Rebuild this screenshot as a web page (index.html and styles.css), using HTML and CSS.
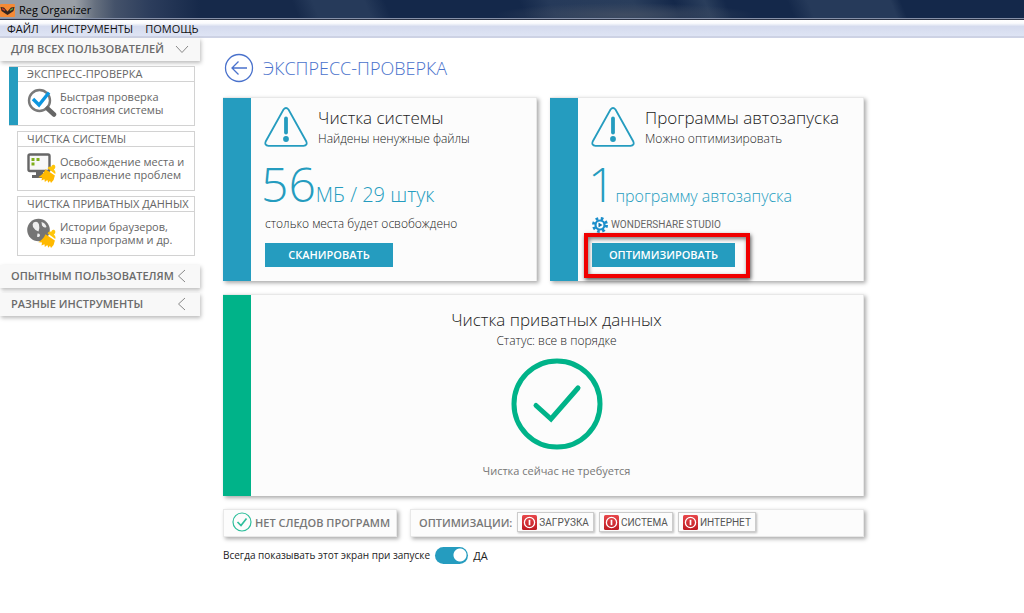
FILE: index.html
```html
<!DOCTYPE html>
<html lang="ru">
<head>
  <meta charset="UTF-8" />
  <meta name="viewport" content="width=device-width, initial-scale=1.0" />
  <title>Reg Organizer</title>
  <link rel="stylesheet" href="styles.css">
</head>
<body>
  <!-- shared icons -->
  <svg class="sprite" aria-hidden="true">
    <symbol id="warning" viewBox="0 0 44 40">
      <path d="M19.5 2.5Q22 -0.5 24.500 2.500L42.300 34.500Q43.800 38.500 39.500 38.800H4.500Q0.200 38.500 1.700 34.500Z" fill="none" stroke="currentColor" stroke-width="1.800"/>
      <path d="M22 11.500V25.500" stroke="currentColor" stroke-width="3.800" stroke-linecap="round"/>
      <circle cx="22" cy="32" r="2.900" fill="currentColor"/>
    </symbol>
    <symbol id="power" viewBox="0 0 15 15">
      <rect width="15" height="15" rx="1.500" fill="url(#red)"/>
      <circle cx="7.500" cy="7.500" r="5.100" fill="none" stroke="#fff" stroke-width="1.300"/>
      <path d="M7.500 4.800V10.200" stroke="#fff" stroke-width="1.700"/>
    </symbol>
    <symbol id="broom" viewBox="0 0 18 19">
      <path d="M9.500 4.200Q10.800 1.800 13.200 2.800Q14 0.200 16 0.800Q18 1.800 17 4.200Q16.600 5 15.800 5.500Q18.200 7.500 17.200 10Z" fill="#ffc60a"/>
      <path d="M7.500 5.200L16.900 11.500Q16.500 15.800 13 19L12 16.800L10.300 18.800L9.300 16L6.800 18L6.500 15.300L3.500 16.500L4 13.500L0.300 13.200Q5.500 10 7.500 5.200Z" fill="#ffb900"/>
    </symbol>
    <linearGradient id="red" x1="0" y1="0" x2="0" y2="1">
      <stop offset="0" stop-color="#e8474b"/>
      <stop offset="1" stop-color="#bd1b22"/>
    </linearGradient>
  </svg>

  <header class="titlebar">
    <svg class="app-icon" width="15" height="16" viewBox="0 0 15 16" aria-hidden="true">
      <rect y="2" width="15" height="13" rx="1" fill="#f58a35"/>
      <path d="M0.500 5L4 5.500L7.500 9.500L11 5.500L14.500 5L13.500 9L7.500 13L1.500 9Z" fill="#33251f"/>
      <path d="M2 6.500L5 8.500" stroke="#d0412c" stroke-width="1.500"/>
      <path d="M10 8.500L13 6.500" stroke="#69a243" stroke-width="1.500"/>
    </svg>
    <span>Reg Organizer</span>
  </header>

  <nav class="menubar">
    <button type="button">ФАЙЛ</button>
    <button type="button">ИНСТРУМЕНТЫ</button>
    <button type="button">ПОМОЩЬ</button>
  </nav>

  <div class="layout">
    <aside class="sidebar">
      <button type="button" class="group">
        ДЛЯ ВСЕХ ПОЛЬЗОВАТЕЛЕЙ
        <svg width="14" height="14" viewBox="0 0 14 14"><path d="M1 4L7 10.500L13 4" fill="none" stroke="#888"/></svg>
      </button>
      <div class="items">
        <a href="#" class="item active">
          <span class="item-title">ЭКСПРЕСС-ПРОВЕРКА</span>
          <span class="item-body">
            <svg width="30" height="30" viewBox="0 0 30 30">
              <circle cx="12.500" cy="12.500" r="10.500" fill="#fff" stroke="#7a7a7a" stroke-width="2.400"/>
              <path d="M20.500 20.500L27 26.500" stroke="#666" stroke-width="4.500" stroke-linecap="round"/>
              <path d="M6 11L12 17L22 4.500" fill="none" stroke="#0c96e0" stroke-width="3.400"/>
            </svg>
            <span>Быстрая проверка<br>состояния системы</span>
          </span>
        </a>
        <a href="#" class="item">
          <span class="item-title">ЧИСТКА СИСТЕМЫ</span>
          <span class="item-body">
            <svg width="30" height="30" viewBox="0 0 30 30">
              <rect x="1.500" y="1.500" width="21" height="16.500" rx="1.500" fill="#f8f8f8" stroke="#666" stroke-width="2.400"/>
              <path d="M9 18H16V22H20V25H5V22H9Z" fill="#666"/>
              <path d="M4.500 5H7.500V8H4.500ZM9.500 5H12.500V8H9.500ZM4.500 9.500H7.500V12.500H4.500Z" fill="#7fae1b"/>
              <use href="#broom" x="11" y="11" width="18" height="19"/>
            </svg>
            <span>Освобождение места и<br>исправление проблем</span>
          </span>
        </a>
        <a href="#" class="item">
          <span class="item-title">ЧИСТКА ПРИВАТНЫХ ДАННЫХ</span>
          <span class="item-body">
            <svg width="30" height="30" viewBox="0 0 30 30">
              <circle cx="11.500" cy="12" r="11.300" fill="#757575"/>
              <path d="M6.500 4.500Q11 2.500 12 6.500Q13 10.500 11.500 13.500Q7.500 12 6 9Q5 6 6.500 4.500ZM14.500 4Q18.500 5 19.500 9Q17 10.500 15 7.500ZM10.500 15.500Q13 15 13 17.500Q12 20 10 18.500Z" fill="#eee"/>
              <use href="#broom" x="11" y="11" width="18" height="19"/>
            </svg>
            <span>Истории браузеров,<br>кэша программ и др.</span>
          </span>
        </a>
      </div>
      <button type="button" class="group">
        ОПЫТНЫМ ПОЛЬЗОВАТЕЛЯМ
        <svg width="14" height="14" viewBox="0 0 14 14"><path d="M10 1L3.500 7L10 13" fill="none" stroke="#888"/></svg>
      </button>
      <button type="button" class="group">
        РАЗНЫЕ ИНСТРУМЕНТЫ
        <svg width="14" height="14" viewBox="0 0 14 14"><path d="M10 1L3.500 7L10 13" fill="none" stroke="#888"/></svg>
      </button>
    </aside>

    <main class="content">
      <div class="heading">
        <button type="button" class="back" aria-label="Назад">
          <svg width="30" height="30" viewBox="0 0 30 30">
            <circle cx="15" cy="15" r="13.500" fill="none" stroke="#4a72cc" stroke-width="1.300"/>
            <path d="M23 15H8M14.500 8.500L8 15L14.500 21.500" fill="none" stroke="#4a72cc" stroke-width="1.300"/>
          </svg>
        </button>
        <h1>ЭКСПРЕСС-ПРОВЕРКА</h1>
      </div>

      <div class="cards">
        <section class="card">
          <div class="card-head">
            <svg width="44" height="40"><use href="#warning"/></svg>
            <div>
              <h2>Чистка системы</h2>
              <p>Найдены ненужные файлы</p>
            </div>
          </div>
          <div class="amount"><strong>56</strong><span>МБ / 29 штук</span></div>
          <p class="note">столько места будет освобождено</p>
          <button type="button" class="action">СКАНИРОВАТЬ</button>
        </section>

        <section class="card">
          <div class="card-head">
            <svg width="44" height="40"><use href="#warning"/></svg>
            <div>
              <h2>Программы автозапуска</h2>
              <p>Можно оптимизировать</p>
            </div>
          </div>
          <div class="amount programs"><strong>1</strong><span>программу автозапуска</span></div>
          <p class="note program">
            <svg width="16" height="16" viewBox="0 0 16 16">
              <circle cx="8" cy="8" r="6.500" fill="none" stroke="#1b8ecb" stroke-width="3" stroke-dasharray="2.600 2.505"/>
              <circle cx="8" cy="8" r="4.500" fill="#fff" stroke="#1b8ecb" stroke-width="2.200"/>
              <path d="M6.500 5.500L10.500 8L6.500 10.500Z" fill="#1579b0"/>
            </svg>
            WONDERSHARE STUDIO
          </p>
          <div class="marked">
            <button type="button" class="action wide">ОПТИМИЗИРОВАТЬ</button>
            <span class="marker"></span>
          </div>
        </section>

        <section class="card ok">
          <h2>Чистка приватных данных</h2>
          <p>Статус: все в порядке</p>
          <svg width="92" height="92" viewBox="0 0 92 92" aria-hidden="true">
            <circle cx="46" cy="46" r="43" fill="none" stroke="#00b389" stroke-width="5"/>
            <path d="M25 47.500L40 61L67 30" fill="none" stroke="#00b389" stroke-width="5" stroke-linecap="round"/>
          </svg>
          <p class="status">Чистка сейчас не требуется</p>
        </section>
      </div>

      <div class="summary">
        <div class="panel traces">
          <svg width="20" height="20" viewBox="0 0 20 20" aria-hidden="true">
            <circle cx="10" cy="10" r="9" fill="none" stroke="#2dbe9b" stroke-width="1.200"/>
            <path d="M5.500 10L9 13.500L14.500 6.500" fill="none" stroke="#2dbe9b" stroke-width="1.700"/>
          </svg>
          НЕТ СЛЕДОВ ПРОГРАММ
        </div>
        <div class="panel optimize">
          <span class="label">ОПТИМИЗАЦИИ:</span>
          <button type="button" class="chip"><svg width="15" height="15"><use href="#power"/></svg>ЗАГРУЗКА</button>
          <button type="button" class="chip"><svg width="15" height="15"><use href="#power"/></svg>СИСТЕМА</button>
          <button type="button" class="chip"><svg width="15" height="15"><use href="#power"/></svg>ИНТЕРНЕТ</button>
        </div>
      </div>

      <div class="startup">
        <label for="showOnStart">Всегда показывать этот экран при запуске</label>
        <input type="checkbox" id="showOnStart" checked>
        <span>ДА</span>
      </div>
    </main>
  </div>
</body>
</html>
```
FILE: styles.css
```css
* {
  box-sizing: border-box;
}

body {
  margin: 0;
  font-family: "Open Sans", "Noto Sans", sans-serif;
  font-size: 11px;
  line-height: 13px;
  color: #222;
  background: #fff;
}

h1, h2, p {
  margin: 0;
  font-weight: 300;
}

button {
  font: inherit;
  color: inherit;
  border: none;
  padding: 0;
  background: none;
  cursor: pointer;
}

svg {
  display: block;
  flex: none;
}

.sprite {
  position: absolute;
  width: 0;
  height: 0;
}

/* window frame */
.titlebar {
  display: flex;
  align-items: center;
  gap: 4px;
  height: 20px;
  border-bottom: 1px solid #2b3346;
  box-shadow: inset 0 -1px #8590a8;
  color: #000;
  background:
    linear-gradient(90deg, #9a9fa6 0, #9a9fa6 75px, #66707f 95px, #44526a 115px, #2c3d5c 150px, #16294a00 200px),
    radial-gradient(ellipse 130px 12px at 625px 15px, #3f4c62 0, #3f4c6200 100%),
    linear-gradient(68deg, #16294a 29%, #263a5a 31%, #263a5a 36%, #14284a 38%, #14284a 51%, #263a5a 54%, #2a3e5c 62%, #14284a 66%, #2a3e5c 69%, #14284a 71%, #14284a 77%, #263a5a 79%, #263a5a 87%, #14284a 88%);
}

.menubar {
  display: flex;
  gap: 12px;
  height: 18px;
  padding: 0 7px;
  border-bottom: 2px solid #cdd2e4;
  background: linear-gradient(#fff, #fafbfd 20%, #d5dbee 40%, #dee4f4);
  color: #111;
}

.layout {
  display: flex;
  align-items: flex-start;
  gap: 23px;
}

/* sidebar */
.sidebar {
  flex: none;
  width: 200px;
}

.group {
  display: flex;
  align-items: center;
  justify-content: space-between;
  width: 100%;
  height: 23px;
  margin-bottom: 5px;
  padding: 0 11px 2px;
  font-weight: 600;
  color: #6b6b6b;
  background: #f8f8f8;
  box-shadow: 1px 2px 4px #bbb;
}

.items {
  display: grid;
  gap: 5px;
  padding: 0 5px 9px 17px;
}

.item {
  display: block;
  border: 1px solid #d2d2d2;
  color: #666;
  text-decoration: none;
  background: #fff;
}

.item.active {
  margin-left: -8px;
  padding-left: 9px;
  border-left: 0;
  background: linear-gradient(90deg, #259cbf 9px, #fff 9px) border-box;
}

.item-title {
  display: block;
  height: 15px;
  padding-left: 9px;
  border-bottom: 1px solid #d2d2d2;
  white-space: nowrap;
}

.item-body {
  display: flex;
  align-items: center;
  gap: 3px;
  height: 43px;
  padding: 0 0 2px 9px;
  white-space: nowrap;
}

/* main area */
.content {
  flex: 1;
  padding: 15px 160px 15px 0;
}

.heading {
  display: flex;
  align-items: center;
  gap: 9px;
  padding-left: 1px;
  margin-bottom: 14px;
}

.heading h1 {
  font-size: 18px;
  line-height: 26px;
  color: #4a72cc;
}

.cards {
  display: grid;
  grid-template-columns: 1fr 1fr;
  gap: 13px;
}

.card {
  min-height: 184px;
  padding: 8px 14px 8px 41px;
  border: 1px solid #e8e8e8;
  border-width: 1px 1px 0 0;
  background: linear-gradient(90deg, #259cbf 28px, #fcfcfc 28px);
  box-shadow: 2px 2px 4px #aaa;
}

.card h2 {
  font-size: 17px;
  line-height: 24px;
}

.card p {
  font-size: 12px;
  line-height: 18px;
}

.card-head {
  display: flex;
  align-items: center;
  gap: 10px;
  color: #259cbf;
}

.card-head div {
  color: #222;
}

.amount {
  display: flex;
  align-items: baseline;
  height: 67px;
  margin-left: -3px;
  font-size: 20px;
  line-height: 72px;
  font-weight: 300;
  color: #259cbf;
}

.amount strong {
  font-size: 48px;
  font-weight: 300;
}

.amount.programs {
  font-size: 16px;
}

.card .note {
  margin: 0 0 10px 1px;
}

.card .program {
  display: flex;
  align-items: center;
  gap: 3px;
  padding-top: 2px;
  font-family: Roboto, sans-serif;
  font-size: 10px;
  line-height: 16px;
  font-weight: 400;
  color: #666;
}

.action {
  display: block;
  width: 128px;
  height: 24px;
  margin-left: 1px;
  padding-bottom: 2px;
  font-weight: 600;
  color: #fff;
  background: #259cbf;
}

.action.wide {
  width: 143px;
}

.marked {
  position: relative;
  width: 144px;
}

.marker {
  position: absolute;
  inset: -10px -15px -11px -7px;
  border: 4px solid #f00000;
  box-shadow: 1px 2px 4px #555, inset 1px 2px 4px #777;
  pointer-events: none;
}

.card.ok {
  grid-column: 1 / -1;
  display: flex;
  flex-direction: column;
  align-items: center;
  min-height: 202px;
  padding-top: 13px;
  background-image: linear-gradient(90deg, #00b389 28px, #fcfcfc 28px);
}

.ok svg {
  margin: 8px 0 12px;
}

.card .status {
  font-weight: 400;
  font-size: 11px;
  color: #777;
}

.summary {
  display: flex;
  gap: 13px;
  margin-top: 13px;
}

.panel {
  display: flex;
  align-items: center;
  height: 28px;
  padding: 0 8px 2px;
  border: 1px solid #e8e8e8;
  background: #fcfcfc;
  box-shadow: 2px 2px 4px #aaa;
  font-weight: 600;
  color: #777;
  white-space: nowrap;
}

.traces {
  gap: 3px;
  width: 174px;
}

.optimize {
  flex: 1;
  gap: 5px;
}

.chip {
  display: flex;
  align-items: center;
  gap: 2px;
  height: 20px;
  padding: 0 4px;
  border: 1px solid #ccc;
  box-shadow: 1px 1px 2px #bbb;
  font-family: Roboto, sans-serif;
  font-size: 10px;
  font-weight: 400;
  color: #555;
}

.startup {
  display: flex;
  align-items: center;
  gap: 5px;
  margin-top: 10px;
}

.startup label {
  font-size: 10px;
}

.startup input {
  appearance: none;
  width: 33px;
  height: 17px;
  margin: 0;
  border-radius: 9px;
  background: radial-gradient(circle at 25px 8px, #fff 6px, #259cbf 7px);
  cursor: pointer;
}
```
